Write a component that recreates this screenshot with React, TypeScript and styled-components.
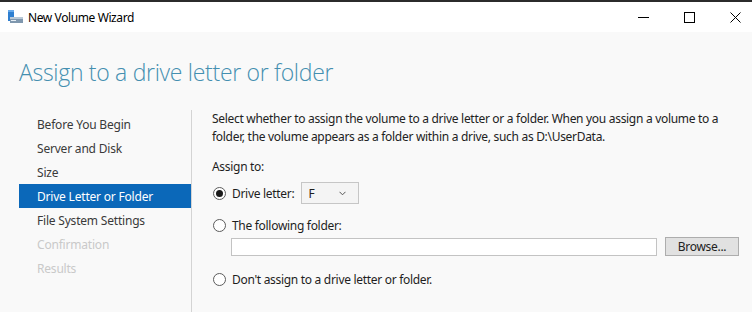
import styled, { createGlobalStyle } from "styled-components";

const Global = createGlobalStyle`
  html, body {
    margin: 0;
    padding: 0;
    background: #f9f9f9;
  }
  body {
    font-family: "Noto Sans", "Open Sans", sans-serif;
  }
`;

const Window = styled.div`
  width: 752px;
  height: 312px;
  display: flex;
  flex-direction: column;
  background: #f9f9f9;
  overflow: hidden;
  color: #1e1e1e;
`;

const TopEdge = styled.div`
  height: 2px;
  background: #2b2b2b;
`;

const TitleBar = styled.div`
  height: 30px;
  background: #ffffff;
  display: flex;
  align-items: center;
  padding-left: 7px;
  gap: 5px;

  .title {
    font-size: 12px;
    letter-spacing: -0.4px;
    color: #000;
    margin-top: 1px;
  }
`;

const Controls = styled.div`
  margin-left: auto;
  margin-right: -6px;
  display: flex;
  align-items: center;
  height: 100%;
`;

const ControlButton = styled.div`
  width: 46px;
  height: 100%;
  display: flex;
  align-items: center;
  justify-content: center;
`;

const Heading = styled.h1`
  margin: 25px 0 0 19px;
  font-family: "Open Sans", "Noto Sans", sans-serif;
  font-weight: 300;
  font-size: 23px;
  line-height: 30px;
  color: #448fb0;
  letter-spacing: -0.3px;
`;

const Main = styled.div`
  margin-top: 23px;
  display: flex;
  flex: 1;
`;

const Nav = styled.ul`
  list-style: none;
  margin: 0 0 0 19px;
  padding: 2px 0 0;
  width: 172px;
  border-right: 1px solid #d4d4d4;
`;

const NavItem = styled.li<{ $active?: boolean; $disabled?: boolean }>`
  height: 24px;
  line-height: 25px;
  padding-left: 18px;
  font-size: 12px;
  letter-spacing: -0.2px;
  color: ${(p) => (p.$active ? "#ffffff" : p.$disabled ? "#c9c9c9" : "#3a3a3a")};
  background: ${(p) => (p.$active ? "#0b68b9" : "transparent")};
`;

const Content = styled.div`
  flex: 1;
  padding-left: 20px;
  font-size: 12px;
  letter-spacing: -0.3px;
  display: flex;
  flex-direction: column;
`;

const Paragraph = styled.p`
  margin: 0;
  line-height: 18px;
  width: 516px;
  color: #222;
`;

const Label = styled.div`
  margin-top: 12px;
  line-height: 18px;
`;

const OptionRow = styled.div<{ $gap: number; $height: number }>`
  margin-top: ${(p) => p.$gap}px;
  height: ${(p) => p.$height}px;
  display: flex;
  align-items: center;
`;

const Radio = styled.span<{ $checked?: boolean }>`
  width: 11px;
  height: 11px;
  margin-left: 1px;
  border: 1px solid #5c5c5c;
  border-radius: 50%;
  background: #fff;
  display: inline-flex;
  align-items: center;
  justify-content: center;
  margin-right: 6px;

  &::after {
    content: "";
    width: 7px;
    height: 7px;
    border-radius: 50%;
    background: ${(p) => (p.$checked ? "#1a1a1a" : "transparent")};
  }
`;

const Select = styled.div`
  margin-left: 7px;
  width: 58px;
  height: 22px;
  box-sizing: border-box;
  border: 1px solid #c6c6c6;
  background: #f4f4f4;
  display: flex;
  align-items: center;
  padding: 0 0 0 6px;

  .chev {
    margin-left: auto;
    margin-right: 12px;
    display: flex;
  }
`;

const FolderRow = styled.div`
  margin-top: 3px;
  margin-left: 19px;
  display: flex;
  align-items: center;
  gap: 8px;
`;

const TextInput = styled.div`
  width: 426px;
  height: 18px;
  box-sizing: border-box;
  border: 1px solid #c3c3c3;
  background: #fff;
`;

const Button = styled.div`
  width: 74px;
  height: 19px;
  box-sizing: border-box;
  border: 1px solid #adadad;
  background: #e1e1e1;
  font-size: 12px;
  display: flex;
  align-items: center;
  justify-content: center;
  color: #222;
`;

function AppIcon() {
  return (
    <svg width="16" height="16" viewBox="0 0 16 16">
      <rect x="1" y="1" width="6" height="11" fill="#2f7fd0" />
      <rect x="1" y="1" width="6" height="2" fill="#66a9ea" />
      <rect x="3" y="8" width="13" height="6" fill="#7f97ae" />
      <rect x="3" y="8" width="13" height="2" fill="#b8c8d6" />
      <rect x="4" y="11" width="5" height="1" fill="#e6eef5" />
    </svg>
  );
}

const navItems = [
  { label: "Before You Begin" },
  { label: "Server and Disk" },
  { label: "Size" },
  { label: "Drive Letter or Folder", active: true },
  { label: "File System Settings" },
  { label: "Confirmation", disabled: true },
  { label: "Results", disabled: true },
];

export default function App() {
  return (
    <Window>
      <Global />
      <TopEdge />
      <TitleBar>
        <AppIcon />
        <span className="title">New Volume Wizard</span>
        <Controls>
          <ControlButton>
            <svg width="11" height="11" viewBox="0 0 11 11">
              <line x1="0" y1="5.5" x2="11" y2="5.5" stroke="#000" strokeWidth="1" />
            </svg>
          </ControlButton>
          <ControlButton>
            <svg width="11" height="11" viewBox="0 0 11 11">
              <rect x="0.5" y="0.5" width="10" height="10" fill="none" stroke="#000" strokeWidth="1" />
            </svg>
          </ControlButton>
          <ControlButton>
            <svg width="11" height="11" viewBox="0 0 11 11">
              <path d="M0.5 0.5 L10.5 10.5 M10.5 0.5 L0.5 10.5" stroke="#000" strokeWidth="1" />
            </svg>
          </ControlButton>
        </Controls>
      </TitleBar>
      <Heading>Assign to a drive letter or folder</Heading>
      <Main>
        <Nav>
          {navItems.map((item) => (
            <NavItem key={item.label} $active={item.active} $disabled={item.disabled}>
              {item.label}
            </NavItem>
          ))}
        </Nav>
        <Content>
          <Paragraph>
            Select whether to assign the volume to a drive letter or a folder. When you assign a volume to a
            folder, the volume appears as a folder within a drive, such as D:\UserData.
          </Paragraph>
          <Label>Assign to:</Label>
          <OptionRow $gap={6} $height={22}>
            <Radio $checked />
            <span>Drive letter:</span>
            <Select>
              <span>F</span>
              <span className="chev">
                <svg width="7" height="5" viewBox="0 0 7 5">
                  <path d="M0.5 0.8 L3.5 3.8 L6.5 0.8" fill="none" stroke="#555" strokeWidth="1" />
                </svg>
              </span>
            </Select>
          </OptionRow>
          <OptionRow $gap={12} $height={18}>
            <Radio />
            <span>The following folder:</span>
          </OptionRow>
          <FolderRow>
            <TextInput />
            <Button>Browse...</Button>
          </FolderRow>
          <OptionRow $gap={14} $height={18}>
            <Radio />
            <span>Don't assign to a drive letter or folder.</span>
          </OptionRow>
        </Content>
      </Main>
    </Window>
  );
}
